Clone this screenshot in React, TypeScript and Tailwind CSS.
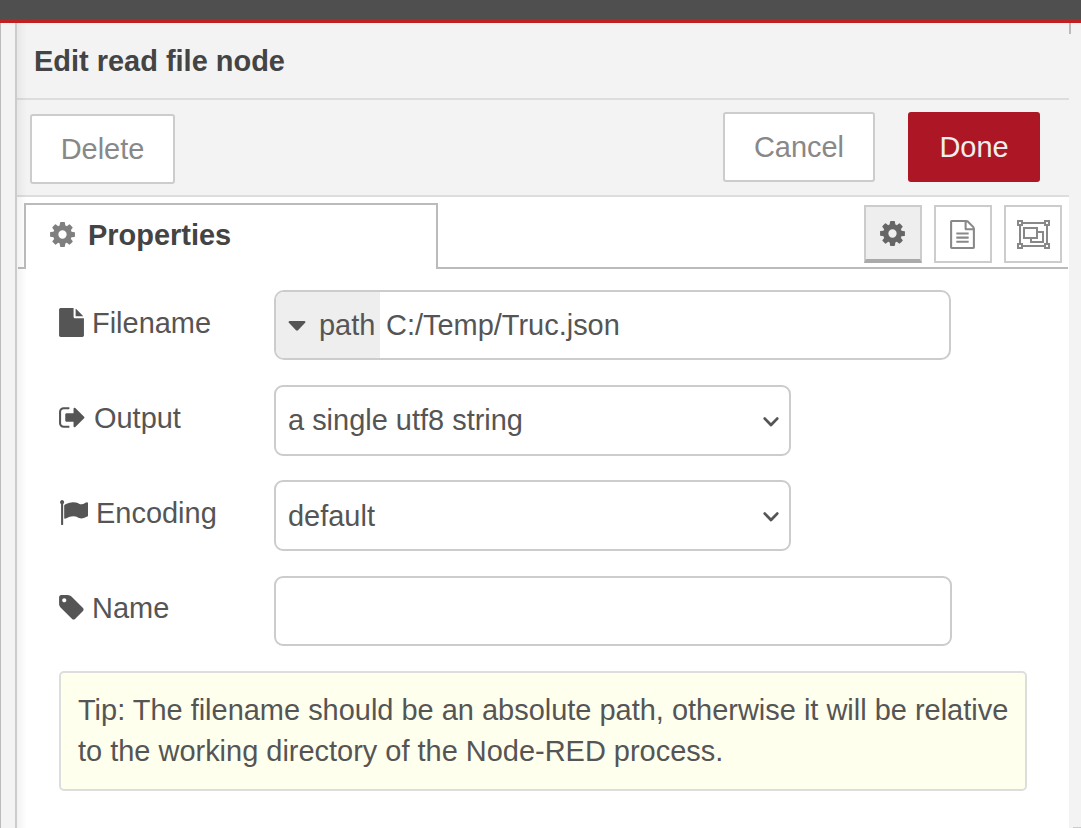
import type { ReactNode } from 'react';

const ICONS = {
  cog: 'M1152 896q0-106-75-181t-181-75-181 75-75 181 75 181 181 75 181-75 75-181zm512-109v222q0 12-8 23t-20 13l-185 28q-19 54-39 91 35 50 107 138 10 12 10 25t-9 23q-27 37-99 108t-94 71q-12 0-26-9l-138-108q-44 23-91 38-16 136-29 186-7 28-36 28h-222q-14 0-24.5-8.5t-11.5-21.5l-28-184q-49-16-90-37l-141 107q-10 9-25 9-14 0-25-11-126-114-165-168-7-10-7-23 0-12 8-23 15-21 51-66.5t54-70.5q-27-50-41-99l-183-27q-13-2-21-12.5t-8-23.5v-222q0-12 8-23t19-13l186-28q14-46 39-92-40-57-107-138-10-12-10-24 0-10 9-23 26-36 98.5-107.5t94.5-71.5q13 0 26 10l138 107q44-23 91-38 16-136 29-186 7-28 36-28h222q14 0 24.5 8.5t11.5 21.5l28 184q49 16 90 37l142-107q9-9 24-9 13 0 25 10 129 119 165 170 7 8 7 22 0 12-8 23-15 21-51 66.5t-54 70.5q26 50 41 98l183 28q13 2 21 12.5t8 23.5z',
  fileText:
    'M1596 380q28 28 48 76t20 88v1152q0 40-28 68t-68 28h-1344q-40 0-68-28t-28-68v-1600q0-40 28-68t68-28h896q40 0 88 20t76 48zm-444-244v376h376q-10-29-22-41l-313-313q-12-12-41-22zm384 1528v-1024h-416q-40 0-68-28t-28-68v-416h-768v1536h1280zm-1024-864q0-14 9-23t23-9h704q14 0 23 9t9 23v64q0 14-9 23t-23 9h-704q-14 0-23-9t-9-23v-64zm736 224q14 0 23 9t9 23v64q0 14-9 23t-23 9h-704q-14 0-23-9t-9-23v-64q0-14 9-23t23-9h704zm0 256q14 0 23 9t9 23v64q0 14-9 23t-23 9h-704q-14 0-23-9t-9-23v-64q0-14 9-23t23-9h704z',
  file: 'M1152 512v-472q22 14 36 28l408 408q14 14 28 36h-472zm-128 32q0 40 28 68t68 28h544v1056q0 40-28 68t-68 28h-1344q-40 0-68-28t-28-68v-1600q0-40 28-68t68-28h800v544z',
  signOut:
    'M704 1440q0 4 1 20t.5 26.5-3 23.5-10 19.5-20.5 6.5h-320q-119 0-203.5-84.5t-84.5-203.5v-704q0-119 84.5-203.5t203.5-84.5h320q13 0 22.5 9.5t9.5 22.5q0 4 1 20t.5 26.5-3 23.5-10 19.5-20.5 6.5h-320q-66 0-113 47t-47 113v704q0 66 47 113t113 47h312l11.5 1 11.5 3 8 5.5 7 9 2 13.5zm928-544q0 26-19 45l-544 544q-19 19-45 19t-45-19-19-45v-288h-448q-26 0-45-19t-19-45v-384q0-26 19-45t45-19h448v-288q0-26 19-45t45-19 45 19l544 544q19 19 19 45z',
  flag: 'M320 256q0 72-64 110v1266q0 13-9.5 22.5t-22.5 9.5h-64q-13 0-22.5-9.5t-9.5-22.5v-1266q-64-38-64-110 0-53 37.5-90.5t90.5-37.5 90.5 37.5 37.5 90.5zm1472 64v763q0 25-12.5 38.5t-39.5 27.5q-215 116-369 116-61 0-123.5-22t-108.5-48-115.5-48-142.5-22q-192 0-464 146-17 9-33 9-26 0-45-19t-19-45v-742q0-32 31-55 21-14 79-43 236-120 421-120 107 0 200 29t219 88q38 19 88 19 54 0 117.5-21t110-47 88-47 54.5-21q26 0 45 19t19 45z',
  tag: 'M576 448q0-53-37.5-90.5t-90.5-37.5-90.5 37.5-37.5 90.5 37.5 90.5 90.5 37.5 90.5-37.5 37.5-90.5zm1067 576q0 53-37 90l-491 492q-39 37-91 37-53 0-90-37l-715-716q-38-37-64.5-101t-26.5-117v-416q0-52 38-90t90-38h416q53 0 117 26.5t102 64.5l715 714q37 39 37 91z',
};

function Icon({ name, className = '' }: { name: keyof typeof ICONS; className?: string }) {
  return (
    <svg viewBox="0 0 1792 1792" className={`size-[29px] shrink-0 ${className}`} fill="currentColor" aria-hidden="true">
      <path d={ICONS[name]} />
    </svg>
  );
}

function ObjectGroupIcon() {
  return (
    <svg viewBox="0 0 33 29" className="h-[29px] w-[33px]" fill="none" stroke="currentColor" strokeWidth="2" aria-hidden="true">
      <path d="M6 3h21M6 26h21M3 6v17M30 6v17" />
      <path d="M1 1h4v4H1zM28 1h4v4h-4zM1 24h4v4H1zM28 24h4v4h-4z" />
      <path d="M7 8h13v10H7zM20 12h6v10H14v-4" />
    </svg>
  );
}

function Chevron() {
  return (
    <svg viewBox="0 0 16 10" className="mt-0.5 -mr-px h-[10px] w-4" fill="none" stroke="#555" strokeWidth="2.8" strokeLinecap="round" strokeLinejoin="round" aria-hidden="true">
      <path d="M1.8 1.6 8 8l6.2-6.4" />
    </svg>
  );
}

function Label({ icon, iconClass, textClass = '', children }: { icon: keyof typeof ICONS; iconClass: string; textClass?: string; children: ReactNode }) {
  return (
    <div className="flex h-[66px] w-[215px] shrink-0 items-center">
      <Icon name={icon} className={iconClass} />
      <span className={textClass}>{children}</span>
    </div>
  );
}

function Select({ value, textClass = '' }: { value: string; textClass?: string }) {
  return (
    <button className="flex h-[71px] w-[517px] items-center justify-between rounded-[9px] border-2 border-[#ccc] bg-white pr-[11px] pl-3">
      <span className={textClass}>{value}</span>
      <Chevron />
    </button>
  );
}

const sideButton = 'flex size-[58px] items-center justify-center border-2 border-[#ccc]';

export default function App() {
  return (
    <div className="flex h-[828px] w-[1081px] flex-col overflow-hidden bg-[#f3f3f3] font-['Liberation_Sans',Arial,sans-serif] text-[28.96px] leading-[41px] text-[#555]">
      <div className="h-[23px] shrink-0 border-b-4 border-[#c02020] bg-[#4f4f4f]" />
      <div className="flex min-h-0 flex-1">
        <div className="w-[17px] shrink-0 border-r-2 border-l border-r-[#ccc] border-l-[#bbb]" />
        <main className="relative flex w-[1052px] shrink-0 flex-col bg-white">
          <div className="pointer-events-none absolute inset-y-0 left-0 z-10 w-2.5 bg-linear-to-r from-black/5 to-transparent" />
          <header className="flex h-[77px] items-center border-b-2 border-[#ddd] bg-[#f3f3f3] pt-0.5 pl-[17px] font-bold text-[#444]">
            Edit read file node
          </header>
          <div className="flex h-[97px] items-start border-b-2 border-[#ddd] bg-[#f3f3f3] pr-[29px] pl-[13px] text-[#888]">
            <button className="mt-[14px] h-[70px] w-[145px] rounded-[3px] border-2 border-[#ccc] bg-white">Delete</button>
            <button className="mt-3 ml-auto h-[70px] w-[152px] rounded-[3px] border-2 border-[#ccc] bg-white">Cancel</button>
            <button className="mt-3 ml-[33px] h-[70px] w-[132px] rounded-[3px] bg-[#ad1625] text-[#eee]">Done</button>
          </div>
          <div className="mr-px ml-px flex h-[72px] items-start">
            <div className="h-[72px] w-[6px] shrink-0 border-b-2 border-[#bbb]" />
            <div className="mt-[6px] flex h-[66px] w-[414px] items-start border-2 border-b-0 border-[#bbb] pt-[10px] pl-[22px] font-bold text-[#444]">
              <Icon name="cog" className="mt-[5px] text-[#7f7f7f]" />
              <span className="ml-[11px]">Properties</span>
            </div>
            <div className="flex h-[72px] flex-1 justify-end gap-3 border-b-2 border-[#bbb] pt-2 pr-[6px] text-[#888]">
              <button className={`${sideButton} border-b-4 border-b-[#aaa] bg-[#eee] pr-px text-[#666]`}>
                <Icon name="cog" />
              </button>
              <button className={`${sideButton} pr-px`}>
                <Icon name="fileText" />
              </button>
              <button className={sideButton}>
                <ObjectGroupIcon />
              </button>
            </div>
          </div>
          <div className="flex flex-col pt-[21px] pr-[42px] pl-[42px]">
            <div className="flex h-[95px]">
              <Label icon="file" iconClass="-mt-0.5 -ml-0.5 mr-[6px]">Filename</Label>
              <div className="flex h-[70px] w-[677px] overflow-hidden rounded-[10px] border-2 border-[#ccc]">
                <div className="flex w-[104px] items-center bg-[#eee] pl-3">
                  <svg viewBox="0 0 18 10" className="mt-[2px] h-[10px] w-[18px]" fill="currentColor" aria-hidden="true">
                    <path d="M1.5 0h15q1.5.6.6 1.8L10 9.2q-1 .9-2 0L.9 1.8Q0 .6 1.5 0z" />
                  </svg>
                  <span className="ml-[13px]">path</span>
                </div>
                <span className="self-center pl-[6px]">C:/Temp/Truc.json</span>
              </div>
            </div>
            <div className="flex h-[95px]">
              <Label icon="signOut" iconClass="-mt-0.5 -ml-px mr-[7px]">Output</Label>
              <Select value="a single utf8 string" />
            </div>
            <div className="flex h-24">
              <Label icon="flag" iconClass="-mt-0.5 mr-[8px]">Encoding</Label>
              <Select value="default" textClass="pt-0.5" />
            </div>
            <div className="flex h-[95px]">
              <Label icon="tag" iconClass="-mt-1 -ml-0.5 mr-[6px]" textClass="-mt-0.5">Name</Label>
              <div className="h-[70px] w-[678px] rounded-[9px] border-2 border-[#ccc]" />
            </div>
            <div className="h-[120px] rounded-[5px] border-2 border-[#ddd] bg-[#ffffed] pt-[17px] pl-[17px] whitespace-nowrap">
              Tip: The filename should be an absolute path, otherwise it will be relative
              <br />
              to the working directory of the Node-RED process.
            </div>
          </div>
        </main>
        <div className="flex flex-1 flex-col items-start justify-between">
          <div className="h-[11px] w-0.5 bg-[#bbb]" />
          <div className="h-px w-2 self-end bg-[#ccc]" />
        </div>
      </div>
    </div>
  );
}
